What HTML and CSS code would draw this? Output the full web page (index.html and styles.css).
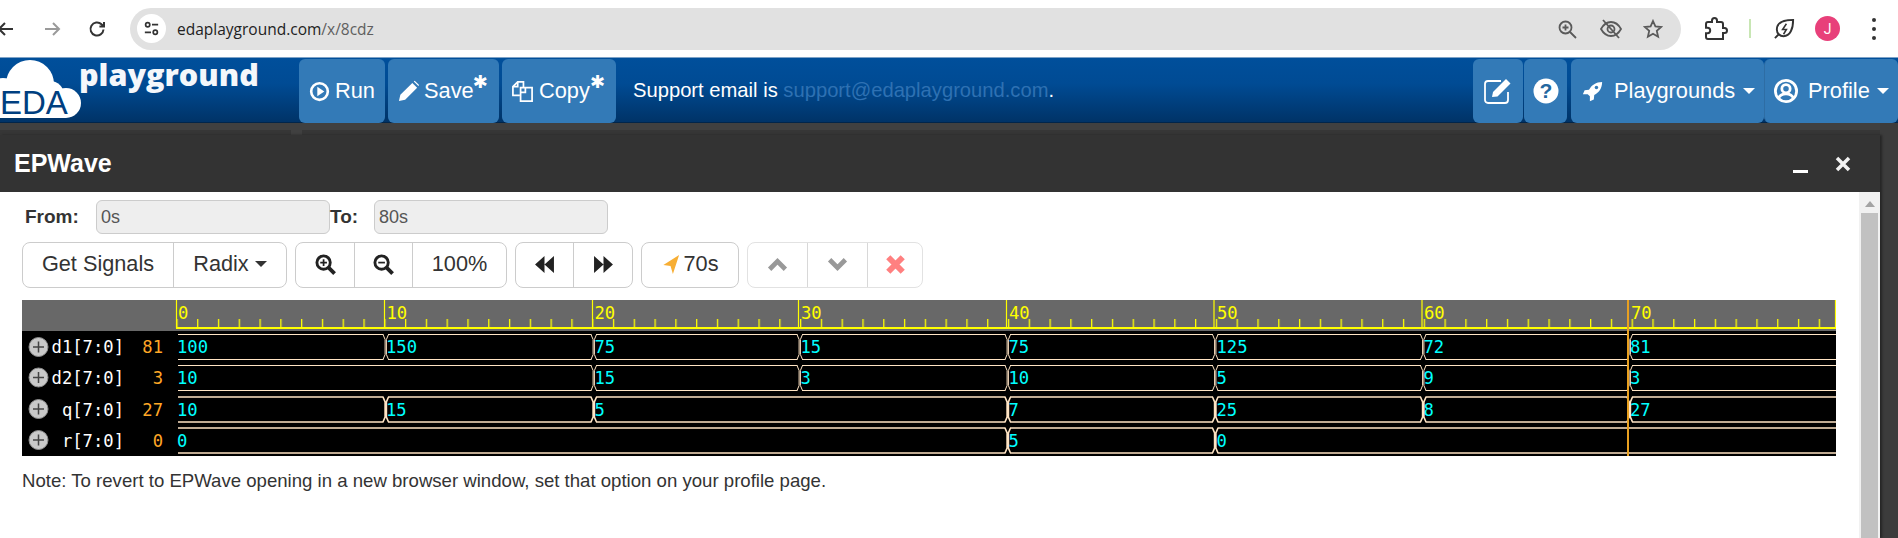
FILE: index.html
```html
<!DOCTYPE html>
<html lang="en">
<head>
  <meta charset="UTF-8">
  <title>EDA Playground - EPWave</title>
  <link rel="stylesheet" href="styles.css">
</head>
<body>

<div class="chrome">
  <svg class="ci ci-back" viewBox="0 0 20 20"><path d="M17 10H3M9 4l-6 6 6 6"/></svg>
  <svg class="ci ci-fwd" viewBox="0 0 20 20"><path d="M3 10h14M11 4l6 6-6 6"/></svg>
  <svg class="ci ci-reload" viewBox="0 0 20 20"><path d="M16.5 10.5a6.5 6.5 0 1 1-2-5.2L17 7.5M17 3v4.6h-4.6"/></svg>
  <div class="omnibox">
    <span class="site-info">
      <svg viewBox="0 0 20 20"><circle cx="6" cy="6" r="2.2"/><path d="M10.5 6H17M3 14h6.5"/><circle cx="14" cy="14" r="2.2"/></svg>
    </span>
    <span class="url">edaplayground.com<span class="url-path">/x/8cdz</span></span>
    <svg class="oi oi-zoom" viewBox="0 0 20 20"><circle cx="8.5" cy="8.5" r="6"/><path d="M13 13l6 6M8.5 5.5v6M5.5 8.5h6"/></svg>
    <svg class="oi oi-eye" viewBox="0 0 24 20"><path d="M2 10c2.5-4.5 6-7 10-7s7.5 2.5 10 7c-2.5 4.5-6 7-10 7s-7.5-2.500-10-7z"/><circle cx="12" cy="10" r="3.5"/><path d="M4 1l16 18"/></svg>
    <svg class="oi oi-star" viewBox="0 0 20 20"><path d="M10 2l2.4 5.400 5.800.6-4.400 3.900 1.300 5.800L10 14.700l-5.100 3 1.300-5.800L1.800 8l5.800-.6z"/></svg>
  </div>
  <svg class="ci ci-puzzle" viewBox="0 0 24 24"><path d="M20.5 11H19V7c0-1.100-.9-2-2-2h-4V3.500C13 2.120 11.880 1 10.500 1S8 2.120 8 3.500V5H4c-1.100 0-1.990.9-1.990 2v3.800H3.500c1.490 0 2.700 1.210 2.700 2.700s-1.210 2.700-2.700 2.700H2V20c0 1.100.9 2 2 2h15v-6h1.500c1.380 0 2.500-1.120 2.500-2.500S21.880 11 20.500 11z"/></svg>
  <span class="chrome-sep"></span>
  <svg class="ci ci-leaf" viewBox="0 0 24 24"><path d="M21 3C11 3 4 6 4 13c0 4 3 7 7 7 7 0 10-8 10-17zM2 22l4-4"/><path d="M14 7l-4 6h4l-3 5" class="thin"/></svg>
  <span class="avatar">J</span>
  <span class="kebab"><i></i><i></i><i></i></span>
</div>

<nav class="navbar">
  <a class="brand">
    <svg class="logo" viewBox="0 0 82 62">
      <g fill="#fff">
        <circle cx="30" cy="25" r="24"/>
        <circle cx="3" cy="34" r="15"/>
        <circle cx="50" cy="36" r="14"/>
        <circle cx="66" cy="44" r="15"/>
        <rect x="-2" y="32" width="68" height="27"/>
      </g>
      <text x="0" y="55" class="logo-eda">EDA</text>
    </svg>
    <span class="logo-word">playground</span>
  </a>
  <a class="nav-btn btn-run">
    <svg class="ni" viewBox="0 0 24 24"><circle cx="12" cy="12" r="9.5" class="ring"/><path d="M9.500 6.500l8 5.500-8 5.500z"/></svg>Run
  </a>
  <a class="nav-btn btn-save">
    <svg class="ni ni-mid" viewBox="0 0 24 24"><path d="M2 22l1.500-6.500L16 3l5 5L8.500 20.500zM17.500 1.500l1-.7 4.500 4.500-.7 1z"/></svg>Save<span class="star">✱</span>
  </a>
  <a class="nav-btn btn-copy">
    <svg class="ni ni-mid" viewBox="0 0 24 24"><path class="ring thin" d="M9 16H2V7l5-5h6v5M7 2v5H2M10 8h12v14H10zM15 8v5h-5"/></svg>Copy<span class="star">✱</span>
  </a>
  <span class="support">Support email is <a class="support-link">support@edaplayground.com</a>.</span>
  <div class="nav-right">
    <a class="nav-btn btn-edit">
      <svg class="ni ni-edit" viewBox="0 0 30 26"><path class="ring thin" d="M25 14v8a3 3 0 0 1-3 3H5a3 3 0 0 1-3-3V6a3 3 0 0 1 3-3h13"/><path d="M9 19l1-5L23 1l4.500 4.500L14.500 18.500z"/></svg>
    </a>
    <a class="nav-btn btn-help">
      <svg class="ni ni-lg" viewBox="0 0 26 26"><circle cx="13" cy="13" r="12.5"/><text x="13" y="20" class="help-mark">?</text></svg>
    </a>
    <a class="nav-btn btn-play">
      <svg class="ni" viewBox="0 0 24 24"><path d="M23 1C16 1 11 4.500 8 10l-5 .5L1 15h5.500L9 17.500V23l4.500-2 .5-5c5.500-3 9-8 9-15z"/><circle cx="16.500" cy="7.500" r="2" class="ni-hole"/></svg>Playgrounds<span class="caret"></span>
    </a>
    <a class="nav-btn btn-profile">
      <svg class="ni ni-user" viewBox="0 0 26 26"><circle cx="13" cy="13" r="11.500" class="ring"/><circle cx="13" cy="10.500" r="4.500" class="ring"/><path class="ring" d="M5 21c1-3.500 3.500-5 8-5s7 1.500 8 5"/></svg>Profile<span class="caret"></span>
    </a>
  </div>
</nav>

<div class="backdrop">
  <div class="behind">
    <span class="behind-left"></span>
    <span class="behind-right"></span>
  </div>
  <div class="modal">
    <div class="modal-head">
      <h4 class="modal-title">EPWave</h4>
      <span class="minimize"></span>
      <svg class="close" viewBox="0 0 16 16"><path d="M2 2l12 12M14 2L2 14"/></svg>
    </div>
    <div class="modal-body">
      <div class="content">
        <div class="range">
          <label class="from-label">From:</label>
          <input class="range-input" type="text" value="0s" disabled>
          <label class="to-label">To:</label>
          <input class="range-input" type="text" value="80s" disabled>
        </div>

        <div class="toolbar">
          <div class="btn-group">
            <button class="btn w-signals">Get Signals</button>
            <button class="btn w-radix">Radix<span class="caret caret-dark"></span></button>
          </div>
          <div class="btn-group">
            <button class="btn w-zoomin">
              <svg class="ti" viewBox="0 0 22 22"><circle cx="9" cy="9" r="7"/><path d="M14 14l6.500 6.500" class="heavy"/><path d="M9 5.500v7M5.500 9h7" class="fine"/></svg>
            </button>
            <button class="btn w-zoomout">
              <svg class="ti" viewBox="0 0 22 22"><circle cx="9" cy="9" r="7"/><path d="M14 14l6.500 6.500" class="heavy"/><path d="M5.500 9h7" class="fine"/></svg>
            </button>
            <button class="btn w-percent">100%</button>
          </div>
          <div class="btn-group">
            <button class="btn w-prev">
              <svg class="ti" viewBox="0 0 20 20"><path class="solid" d="M10 2v16L1 10zM19 2v16l-9-8z"/></svg>
            </button>
            <button class="btn w-next">
              <svg class="ti" viewBox="0 0 20 20"><path class="solid" d="M1 2v16l9-8zM10 2v16l9-8z"/></svg>
            </button>
          </div>
          <button class="btn btn-single w-cursor">
            <svg class="ti ti-arrow" viewBox="0 0 18 22"><path d="M17.500 1L1 11.500l7.500 1L11 21z"/></svg>70s
          </button>
          <div class="btn-group group-muted">
            <button class="btn w-up">
              <svg class="ti" viewBox="0 0 20 14"><path class="chev" d="M2.500 11.500L10 4l7.500 7.500"/></svg>
            </button>
            <button class="btn w-down">
              <svg class="ti" viewBox="0 0 20 14"><path class="chev" d="M2.500 2.500L10 10l7.500-7.500"/></svg>
            </button>
            <button class="btn w-del">
              <svg class="ti" viewBox="0 0 16 16"><path class="cross" d="M2.500 2.500l11 11M13.500 2.500l-11 11"/></svg>
            </button>
          </div>
        </div>

        <svg class="wave" viewBox="22 300 1814 156" width="1814" height="156">
          <defs>
            <pattern id="minor" x="176.300" y="319" width="20.790" height="9" patternUnits="userSpaceOnUse">
              <rect x="0" y="0" width="1.300" height="9" fill="#ffff00"/>
            </pattern>
            <g id="tr">
              <rect x="-1" y="-1.500" width="4.500" height="28" class="tr-gap"/>
              <path d="M-1.500 0L.6 5V20L-1.500 25M4 0L1.900 5V20L4 25"/>
            </g>
          </defs>

          <!-- ruler -->
          <rect x="22" y="300" width="1814" height="31" fill="#686868"/>
          <rect x="176.300" y="319" width="1659.700" height="9" fill="url(#minor)"/>
          <rect x="176" y="327" width="1660" height="2" fill="#ffff00"/>
          <g class="major">
            <path d="M176.500 300V328M384.500 300V328M592.500 300V328M798.500 300V328M1006.500 300V328M1214 300V328M1422 300V328M1835.500 300V328"/>
          </g>
          <g class="ruler-text">
            <text x="178" y="319">0</text>
            <text x="386.500" y="319">10</text>
            <text x="594.500" y="319">20</text>
            <text x="801" y="319">30</text>
            <text x="1009" y="319">40</text>
            <text x="1217" y="319">50</text>
            <text x="1424" y="319">60</text>
            <text x="1631" y="319">70</text>
          </g>

          <!-- signal rows -->
          <rect x="22" y="331" width="1814" height="125" fill="#000"/>

          <g class="plus">
            <circle cx="38.500" cy="347" r="9.500"/><path d="M38.500 341.500v11M33 347h11"/>
            <circle cx="38.500" cy="377.500" r="9.500"/><path d="M38.500 372v11M33 377.500h11"/>
            <circle cx="38.500" cy="409" r="9.500"/><path d="M38.500 403.500v11M33 409h11"/>
            <circle cx="38.500" cy="440" r="9.500"/><path d="M38.500 434.500v11M33 440h11"/>
          </g>
          <g class="sig-name">
            <text x="124" y="353">d1[7:0]</text>
            <text x="124" y="384">d2[7:0]</text>
            <text x="124" y="416">q[7:0]</text>
            <text x="124" y="447">r[7:0]</text>
          </g>
          <g class="sig-now">
            <text x="163" y="353">81</text>
            <text x="163" y="384">3</text>
            <text x="163" y="416">27</text>
            <text x="163" y="447">0</text>
          </g>

          <g class="trace">
            <path d="M178 334.500H1836M178 359.500H1836"/>
            <use href="#tr" x="384.500" y="334.500"/>
            <use href="#tr" x="592.500" y="334.500"/>
            <use href="#tr" x="798.500" y="334.500"/>
            <use href="#tr" x="1006.500" y="334.500"/>
            <use href="#tr" x="1214" y="334.500"/>
            <use href="#tr" x="1422" y="334.500"/>
            <use href="#tr" x="1628.500" y="334.500"/>
            <path d="M178 365.500H1836M178 390.500H1836"/>
            <use href="#tr" x="592.500" y="365.500"/>
            <use href="#tr" x="798.500" y="365.500"/>
            <use href="#tr" x="1006.500" y="365.500"/>
            <use href="#tr" x="1214" y="365.500"/>
            <use href="#tr" x="1422" y="365.500"/>
            <use href="#tr" x="1628.500" y="365.500"/>
          </g>
          <g class="trace trace-wide">
            <path d="M178 397H1836M178 422H1836"/>
            <use href="#tr" x="384.500" y="397"/>
            <use href="#tr" x="592.500" y="397"/>
            <use href="#tr" x="1006.500" y="397"/>
            <use href="#tr" x="1214" y="397"/>
            <use href="#tr" x="1422" y="397"/>
            <use href="#tr" x="1628.500" y="397"/>
            <path d="M178 428H1836M178 453H1836"/>
            <use href="#tr" x="1006.500" y="428"/>
            <use href="#tr" x="1214" y="428"/>
          </g>

          <g class="sig-val">
            <text x="177" y="353">100</text><text x="386" y="353">150</text><text x="594.500" y="353">75</text><text x="800.500" y="353">15</text><text x="1008.500" y="353">75</text><text x="1216.500" y="353">125</text><text x="1423.500" y="353">72</text><text x="1630" y="353">81</text>
            <text x="177" y="384">10</text><text x="594.500" y="384">15</text><text x="800.500" y="384">3</text><text x="1008.500" y="384">10</text><text x="1216.500" y="384">5</text><text x="1423.500" y="384">9</text><text x="1630" y="384">3</text>
            <text x="177" y="416">10</text><text x="386" y="416">15</text><text x="594.500" y="416">5</text><text x="1008.500" y="416">7</text><text x="1216.500" y="416">25</text><text x="1423.500" y="416">8</text><text x="1630" y="416">27</text>
            <text x="177" y="447">0</text><text x="1008.500" y="447">5</text><text x="1216.500" y="447">0</text>
          </g>

          <!-- cursor -->
          <rect x="1627" y="300" width="2" height="156" fill="#e8a020"/>
        </svg>

        <p class="note">Note: To revert to EPWave opening in a new browser window, set that option on your profile page.</p>
      </div>
      <div class="scrollbar">
        <span class="scroll-arrow"></span>
        <span class="scroll-thumb"></span>
      </div>
    </div>
  </div>
</div>

</body>
</html>
```

FILE: styles.css
```css
* {
  margin: 0;
  padding: 0;
  box-sizing: border-box;
}

html, body {
  height: 100%;
  overflow: hidden;
}

body {
  display: flex;
  flex-direction: column;
  font-family: 'Liberation Sans', Arial, sans-serif;
  background: #fff;
}

/* browser toolbar */
.chrome {
  height: 57px;
  flex: none;
  display: flex;
  align-items: center;
  background: #fff;
  color: #444;
}

.ci {
  flex: none;
  fill: none;
  stroke: #333;
  stroke-width: 2;
}

.ci-back {
  width: 20px;
  height: 20px;
  margin-left: -4px;
}

.ci-fwd {
  width: 20px;
  height: 20px;
  margin-left: 26px;
  stroke: #9a9a9a;
}

.ci-reload {
  width: 20px;
  height: 20px;
  margin-left: 25px;
}

.omnibox {
  width: 1551px;
  height: 42px;
  margin-left: 23px;
  flex: none;
  display: flex;
  align-items: center;
  background: #e1e1e1;
  border-radius: 21px;
}

.site-info {
  width: 29px;
  height: 29px;
  margin-left: 7px;
  display: flex;
  align-items: center;
  justify-content: center;
  background: #fff;
  border-radius: 50%;
}

.site-info svg {
  width: 19px;
  height: 19px;
  fill: none;
  stroke: #333;
  stroke-width: 1.8;
}

.url {
  margin-left: 11px;
  font-family: 'Open Sans', sans-serif;
  font-size: 15.5px;
  color: #222;
}

.url-path {
  color: #5f5f5f;
}

.oi {
  flex: none;
  fill: none;
  stroke: #5a5a5a;
  stroke-width: 1.8;
}

.oi-zoom {
  width: 20px;
  height: 20px;
  margin-left: auto;
}

.oi-eye {
  width: 24px;
  height: 20px;
  margin-left: 22px;
}

.oi-star {
  width: 20px;
  height: 20px;
  margin-left: 20px;
  margin-right: 18px;
}

.ci-puzzle {
  width: 24px;
  height: 24px;
  margin-left: 23px;
}

.chrome-sep {
  width: 2px;
  height: 19px;
  margin-left: 21px;
  background: #c8e6b4;
}

.ci-leaf {
  width: 23px;
  height: 23px;
  margin-left: 22px;
}

.ci-leaf .thin {
  stroke-width: 1.6;
}

.avatar {
  width: 25px;
  height: 25px;
  margin-left: 19px;
  display: flex;
  align-items: center;
  justify-content: center;
  background: #e8407a;
  border-radius: 50%;
  color: #fff;
  font-family: Roboto, sans-serif;
  font-size: 14px;
}

.kebab {
  margin-left: 32px;
  display: flex;
  flex-direction: column;
  gap: 5px;
}

.kebab i {
  width: 4px;
  height: 4px;
  background: #333;
  border-radius: 50%;
}

/* site navbar */
.navbar {
  height: 66px;
  flex: none;
  display: flex;
  align-items: flex-start;
  padding-top: 1px;
  background: linear-gradient(to bottom, #004f9b 0%, #004b94 40%, #003367 100%);
  border-top: 1px solid #7fa3c7;
  border-bottom: 1px solid #01254a;
  color: #fff;
}

.brand {
  width: 299px;
  height: 63px;
  flex: none;
  display: block;
  position: relative;
}

.logo {
  position: absolute;
  left: 0;
  top: 0;
  width: 82px;
  height: 62px;
}

.logo-eda {
  font-family: 'Liberation Sans', sans-serif;
  font-size: 33px;
  fill: #003f80;
}

.logo-word {
  position: absolute;
  left: 79px;
  top: 3px;
  line-height: 24px;
  font-family: 'Open Sans', sans-serif;
  font-size: 30.5px;
  font-weight: 800;
  color: #f4f7fb;
}

.nav-btn {
  height: 64px;
  flex: none;
  display: flex;
  align-items: center;
  background: #337ab7;
  border-radius: 6px;
  font-size: 21.8px;
  color: #fff;
}

.ni {
  width: 21px;
  height: 21px;
  flex: none;
  fill: #fff;
}

.ni-mid {
  width: 23px;
  height: 23px;
}

.ni-lg {
  width: 26px;
  height: 26px;
}

.ni-edit {
  width: 30px;
  height: 26px;
}

.ni-user {
  width: 24px;
  height: 24px;
}

.ni-hole {
  fill: #337ab7;
}

.ring {
  fill: none;
  stroke: #fff;
  stroke-width: 3;
}

.ring.thin {
  stroke-width: 1.8;
}

.btn-run {
  width: 86px;
  padding-left: 10px;
  gap: 5px;
}

.btn-save {
  width: 111px;
  margin-left: 3px;
  padding-left: 9px;
  gap: 4px;
}

.btn-copy {
  width: 114px;
  margin-left: 3px;
  padding-left: 9px;
  gap: 5px;
}

.star {
  margin-left: -5px;
  align-self: flex-start;
  margin-top: 12px;
  font-family: 'DejaVu Sans', sans-serif;
  font-size: 18px;
  font-weight: 700;
}

.support {
  margin-left: 17px;
  line-height: 62px;
  font-size: 20.2px;
  white-space: nowrap;
}

.support-link {
  color: #2e71b3;
}

.nav-right {
  margin-left: auto;
  display: flex;
}

.btn-edit {
  width: 50px;
  justify-content: center;
}

.btn-help {
  width: 43px;
  margin-left: 1px;
  justify-content: center;
}

.help-mark {
  font-family: 'Liberation Sans', sans-serif;
  font-size: 21px;
  font-weight: 700;
  text-anchor: middle;
  fill: #23679f;
}

.btn-play {
  width: 193px;
  margin-left: 4px;
  padding-left: 11px;
  gap: 11px;
}

.btn-profile {
  width: 134px;
  padding-left: 9px;
  gap: 10px;
  border-left: 1px solid #2e6da4;
}

.caret {
  width: 0;
  height: 0;
  margin-left: -3px;
  border-top: 6px solid #fff;
  border-left: 6px solid transparent;
  border-right: 6px solid transparent;
}

.caret-dark {
  margin-left: 6px;
  border-top-color: #333;
}

/* dimmed page and the modal over it */
.backdrop {
  flex: 1;
  min-height: 0;
  display: flex;
  flex-direction: column;
  padding-right: 18px;
  background: #3c3c3c;
}

.behind {
  height: 12px;
  flex: none;
  display: flex;
  align-items: flex-end;
  background: #404040;
}

.behind-left {
  width: 291px;
  height: 5px;
  background: #363636;
}

.behind-right {
  flex: 1;
  height: 5px;
  margin-left: 11px;
  background: #363636;
}

.modal {
  flex: 1;
  min-height: 0;
  display: flex;
  flex-direction: column;
  box-shadow: 2px 0 2px #262626;
}

.modal-head {
  height: 57px;
  flex: none;
  display: flex;
  align-items: center;
  background: #333;
  color: #fff;
}

.modal-title {
  margin-left: 14px;
  font-size: 25px;
  font-weight: 700;
}

.minimize {
  width: 15px;
  height: 3px;
  margin-left: auto;
  margin-top: 15px;
  background: #fff;
}

.close {
  width: 16px;
  height: 16px;
  margin-left: 27px;
  margin-right: 29px;
  fill: none;
  stroke: #f2f2f2;
  stroke-width: 3.5;
}

.modal-body {
  flex: 1;
  min-height: 0;
  display: flex;
  background: #fff;
}

.content {
  flex: 1;
  min-width: 0;
  padding: 8px 0 0 22px;
  color: #333;
}

.scrollbar {
  width: 21px;
  flex: none;
  display: flex;
  flex-direction: column;
  align-items: center;
  background: #f1f1f1;
}

.scroll-arrow {
  margin-top: 9px;
  border-bottom: 6px solid #a3a3a3;
  border-left: 5px solid transparent;
  border-right: 5px solid transparent;
}

.scroll-thumb {
  width: 17px;
  flex: 1;
  margin-top: 6px;
  background: #c1c1c1;
}

.range {
  display: flex;
  align-items: center;
  height: 34px;
}

.from-label {
  width: 74px;
  padding-left: 3px;
  font-size: 19px;
  font-weight: 700;
}

.to-label {
  width: 44px;
  font-size: 19px;
  font-weight: 700;
}

.range-input {
  width: 234px;
  height: 34px;
  padding-left: 4px;
  background: #eee;
  border: 1px solid #ccc;
  border-radius: 6px;
  font-family: inherit;
  font-size: 18px;
  color: #555;
}

.toolbar {
  display: flex;
  gap: 8px;
  margin-top: 8px;
}

.btn-group {
  display: flex;
  height: 46px;
  border: 1px solid #ccc;
  border-radius: 8px;
  background: #fff;
}

.group-muted {
  border-color: #e2e2e2;
}

.btn {
  height: 100%;
  flex: none;
  display: flex;
  align-items: center;
  justify-content: center;
  padding-bottom: 2px;
  background: none;
  border: none;
  border-right: 1px solid #ccc;
  font-family: inherit;
  font-size: 21.7px;
  color: #333;
}

.btn:last-child {
  border-right: none;
}

.group-muted .btn {
  border-right-color: #d8d8d8;
}

.group-muted .btn:last-child {
  border-right: none;
}

.btn-single {
  height: 46px;
  border: 1px solid #ccc;
  border-radius: 8px;
}

.w-signals { width: 151px; }
.w-radix { width: 112px; }
.w-zoomin { width: 59px; }
.w-zoomout { width: 58px; }
.w-percent { width: 93px; }
.w-prev { width: 58px; }
.w-next { width: 58px; }
.w-cursor { width: 98px; gap: 4px; }
.w-up { width: 60px; }
.w-down { width: 60px; }
.w-del { width: 54px; }

.ti {
  width: 21px;
  height: 21px;
  fill: none;
  stroke: #222;
  stroke-width: 3;
}

.ti .heavy {
  stroke-width: 4;
}

.ti .fine {
  stroke-width: 1.8;
}

.ti .solid {
  fill: #222;
  stroke: none;
}

.ti-arrow {
  width: 18px;
  fill: #f7ae34;
  stroke: none;
}

.ti .chev {
  stroke: #999;
  stroke-width: 4.5;
}

.ti .cross {
  stroke: #ff8080;
  stroke-width: 4.5;
}

/* waveform */
.wave {
  display: block;
  margin-top: 12px;
}

.major path {
  stroke: #ffff00;
  stroke-width: 1.2;
  fill: none;
}

.ruler-text text,
.sig-name text,
.sig-now text,
.sig-val text {
  font-family: 'DejaVu Sans Mono', monospace;
  font-size: 17.2px;
}

.ruler-text text {
  fill: #ffff00;
}

.sig-name text {
  fill: #fff;
  text-anchor: end;
}

.sig-now text {
  fill: #ffa726;
  text-anchor: end;
}

.sig-val text {
  fill: #00ffff;
}

.plus circle {
  fill: #c9c9c9;
  stroke: #8d8d8d;
  stroke-width: 1;
}

.plus path {
  fill: none;
  stroke: #444;
  stroke-width: 1.5;
}

.trace {
  fill: none;
  stroke: #ffe4c4;
  stroke-width: 1;
}

.trace-wide {
  stroke-width: 1.6;
}

.tr-gap {
  fill: #000;
  stroke: none;
}

.note {
  margin-top: 15px;
  font-size: 18.6px;
  line-height: 20px;
  color: #333;
}
```
